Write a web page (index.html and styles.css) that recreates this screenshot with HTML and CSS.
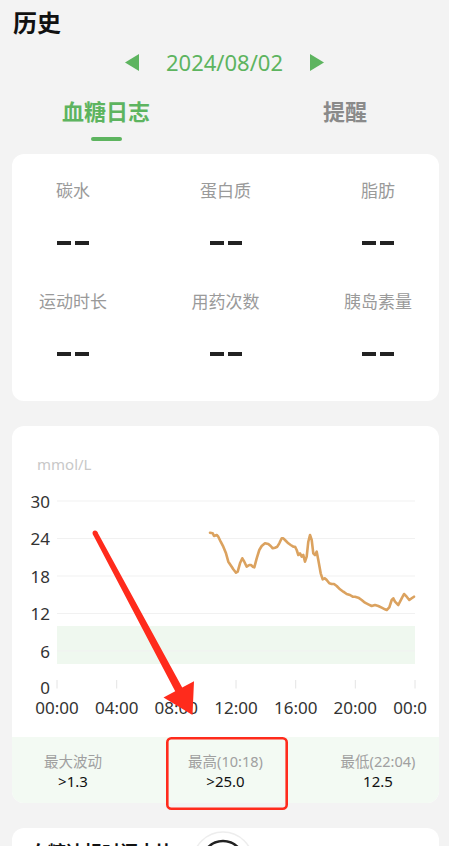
FILE: index.html
```html
<!DOCTYPE html>
<html lang="zh-CN">
<head>
<meta charset="UTF-8">
<title>历史</title>
<link rel="stylesheet" href="styles.css">
</head>
<body>
<div class="page">
  <h1 class="title">历史</h1>

  <div class="date-bar">
    <svg class="nav-arrow" width="14" height="17" viewBox="0 0 14 17"><polygon points="14,0 14,17 0,8.5"/></svg>
    <span class="date">2024/08/02</span>
    <svg class="nav-arrow" width="14" height="17" viewBox="0 0 14 17"><polygon points="0,0 0,17 14,8.5"/></svg>
  </div>

  <div class="tabs">
    <div class="tab active">血糖日志</div>
    <div class="tab">提醒</div>
  </div>

  <!-- 饮食 / 运动 / 用药 汇总 -->
  <div class="card summary">
    <div class="summary-row">
      <div class="item"><div class="label">碳水</div><div class="dash"><i></i><i></i></div></div>
      <div class="item"><div class="label">蛋白质</div><div class="dash"><i></i><i></i></div></div>
      <div class="item"><div class="label">脂肪</div><div class="dash"><i></i><i></i></div></div>
    </div>
    <div class="summary-row">
      <div class="item"><div class="label">运动时长</div><div class="dash"><i></i><i></i></div></div>
      <div class="item"><div class="label">用药次数</div><div class="dash"><i></i><i></i></div></div>
      <div class="item"><div class="label">胰岛素量</div><div class="dash"><i></i><i></i></div></div>
    </div>
  </div>

  <!-- 血糖曲线 -->
  <div class="card chart-card">
    <div class="unit">mmol/L</div>
    <svg class="chart" width="415" height="265" viewBox="12 472 415 265">
      <rect class="target" x="57" y="626" width="358" height="38"/>
      <g class="grid">
        <line x1="57" y1="501" x2="415" y2="501"/>
        <line x1="57" y1="538.5" x2="415" y2="538.5"/>
        <line x1="57" y1="576" x2="415" y2="576"/>
        <line x1="57" y1="613.5" x2="415" y2="613.5"/>
        <line x1="57" y1="651" x2="415" y2="651"/>
      </g>
      <g class="ticks">
        <line x1="57" y1="680" x2="57" y2="688.5"/>
        <line x1="116.7" y1="680" x2="116.7" y2="688.5"/>
        <line x1="176.3" y1="680" x2="176.3" y2="688.5"/>
        <line x1="236" y1="680" x2="236" y2="688.5"/>
        <line x1="295.7" y1="680" x2="295.7" y2="688.5"/>
        <line x1="355.3" y1="680" x2="355.3" y2="688.5"/>
        <line x1="415" y1="680" x2="415" y2="688.5"/>
      </g>
      <g class="y-labels">
        <text x="50" y="501">30</text>
        <text x="50" y="538.5">24</text>
        <text x="50" y="576">18</text>
        <text x="50" y="613.5">12</text>
        <text x="50" y="651">6</text>
        <text x="50" y="687">0</text>
      </g>
      <g class="x-labels">
        <text x="57" y="707">00:00</text>
        <text x="116.7" y="707">04:00</text>
        <text x="176.3" y="707">08:00</text>
        <text x="236" y="707">12:00</text>
        <text x="295.7" y="707">16:00</text>
        <text x="355.3" y="707">20:00</text>
        <text x="415" y="707">00:00</text>
      </g>
      <polyline class="glucose" points="210,532.7 212.7,533.3 214,536 216.7,535 218.3,536.7 220.7,541.7 223.3,546.7 226,553.3 228.3,561.7 231.7,566.7 233.3,569.3 236,572.7 237.7,571.7 240,563.3 242.3,558.3 244.3,561.7 246.7,566.7 249.3,565 251,565 252.7,566.7 254.3,567.3 256.7,558.3 259.3,550 261.7,546 265,543.3 268.3,544 270.7,546 272.7,548.3 275,547.7 277.3,546.7 279.3,543.3 281.7,538.3 283.3,538.3 286,541 288.3,543.3 290.7,545 293.3,546.7 295,546.7 296.7,550 298.3,555 300,553.3 301.7,556.7 303.3,555 305,561.7 306.7,556.7 308.3,541.7 310,535 311.7,540 313.3,553.3 315,555 316.7,551.7 318.3,560 320.7,573.3 322.7,579.3 325,578.3 326.7,580 329.3,583.3 331.7,584 334,584 336.7,586 340,589.3 343.3,591.7 346.7,594 350,595 352.7,596.7 355,596.7 358.3,597.7 361.7,600 365,602.7 368.3,604.3 371.7,606 375,605 378.3,606 381.7,607.7 385,609.3 386.7,610 389.3,607.3 391.7,600 393.3,598.3 395,601.7 398.3,605 401.7,598.3 404,594 406.7,596.7 409.3,600 411.7,598.3 414,596.7"/>
    </svg>
    <div class="stats">
      <div class="stat"><div class="stat-label">最大波动</div><div class="stat-value">&gt;1.3</div></div>
      <div class="stat"><div class="stat-label">最高(10:18)</div><div class="stat-value">&gt;25.0</div></div>
      <div class="stat"><div class="stat-label">最低(22:04)</div><div class="stat-value">12.5</div></div>
    </div>
  </div>

  <div class="card trend">
    <div class="trend-title">血糖达标时间占比</div>
    <svg class="ring" width="64" height="64" viewBox="0 0 64 64">
      <circle cx="32" cy="32" r="30" class="ring-bg"/>
      <circle cx="32" cy="32" r="21" class="ring-fg"/>
    </svg>
  </div>

  <!-- 标注：红色箭头和框 -->
  <svg class="markup" width="449" height="846" viewBox="0 0 449 846">
    <circle cx="95" cy="533" r="2.5"/>
    <polygon points="97.2,531.8 182.2,687.5 194,681.3 192.5,715 163.5,697.5 175.2,691.3 92.8,534.2"/>
    <rect x="167.3" y="738.3" width="119.4" height="70.4" rx="4" class="box"/>
  </svg>
</div>
</body>
</html>
```

FILE: styles.css
```css
* {
  box-sizing: border-box;
}

body {
  margin: 0;
  background: #f3f3f3;
  font-family: "Noto Sans", "Noto Sans CJK SC", sans-serif;
  color: #111;
}

.page {
  position: relative;
  height: 846px;
  overflow: hidden;
}

.title {
  margin: 0;
  padding: 7px 13px 0;
  font-size: 24px;
  line-height: 32px;
  font-weight: 700;
}

.date-bar {
  display: flex;
  align-items: center;
  justify-content: center;
  gap: 27px;
  height: 30px;
  margin-top: 8px;
}

.nav-arrow {
  fill: #5db45f;
}

.date {
  font-size: 22px;
  line-height: 30px;
  color: #5db45f;
}

.tabs {
  display: flex;
  align-items: flex-start;
  gap: 173px;
  padding: 19px 0 0 62px;
}

.tab {
  font-size: 22px;
  line-height: 30px;
  font-weight: 700;
  color: #8a8a8a;
}

.tab.active {
  color: #5db45f;
}

.tab.active::after {
  content: "";
  display: block;
  width: 31px;
  height: 4px;
  margin: 11px auto 0;
  background: #5db45f;
  border-radius: 2px;
}

.card {
  width: 427px;
  margin-left: 12px;
  background: #fff;
  border-radius: 12px;
}

.summary {
  margin-top: 13px;
  padding: 25px 16px 37px;
  display: flex;
  flex-direction: column;
  gap: 37px;
}

.summary-row {
  display: flex;
  justify-content: space-between;
}

.item {
  width: 90px;
  text-align: center;
}

.label {
  font-size: 17px;
  line-height: 24px;
  color: #9a9a9a;
  white-space: nowrap;
}

.dash {
  display: flex;
  justify-content: center;
  align-items: center;
  gap: 4px;
  height: 20px;
  margin-top: 30px;
}

.dash i {
  width: 14px;
  height: 3.5px;
  background: #222;
}

.chart-card {
  margin-top: 25px;
  overflow: hidden;
}

.unit {
  height: 46px;
  padding: 26px 0 0 25px;
  font-size: 15px;
  line-height: 24px;
  color: #c8c8c8;
}

.chart {
  display: block;
  font-family: "Noto Sans", "Noto Sans CJK SC", sans-serif;
}

.target {
  fill: #eff8ef;
}

.grid line {
  stroke: #f1f1f1;
  stroke-width: 1;
}

.ticks line {
  stroke: #e4e4e4;
  stroke-width: 1;
}

.y-labels text {
  font-size: 17px;
  fill: #333;
  text-anchor: end;
  dominant-baseline: central;
}

.x-labels text {
  font-size: 17px;
  fill: #333;
  text-anchor: middle;
  dominant-baseline: central;
}

.glucose {
  fill: none;
  stroke: #dba25f;
  stroke-width: 2.6;
  stroke-linejoin: round;
  stroke-linecap: round;
}

.stats {
  display: flex;
  justify-content: space-between;
  padding: 14px 16px 12px;
  background: #f3faf3;
}

.stat {
  width: 90px;
  text-align: center;
  white-space: nowrap;
}

.stat-label {
  font-size: 14.5px;
  line-height: 20px;
  color: #a0a0a0;
}

.stat-value {
  font-size: 15px;
  line-height: 20px;
  color: #111;
}

.trend {
  margin-top: 25px;
  height: 120px;
  display: flex;
  align-items: flex-start;
  padding: 2px 18px 0;
}

.trend-title {
  margin-top: 9px;
  font-size: 18px;
  line-height: 26px;
  font-weight: 700;
}

.ring {
  margin-left: 17px;
}

.ring-bg {
  fill: #fff;
  stroke: #ededed;
  stroke-width: 1.5;
}

.ring-fg {
  fill: none;
  stroke: #222;
  stroke-width: 2.5;
}

.markup {
  position: absolute;
  left: 0;
  top: 0;
  pointer-events: none;
  fill: #ff2b1c;
}

.markup .box {
  fill: none;
  stroke: #ff2b1c;
  stroke-width: 2.6;
}
```
